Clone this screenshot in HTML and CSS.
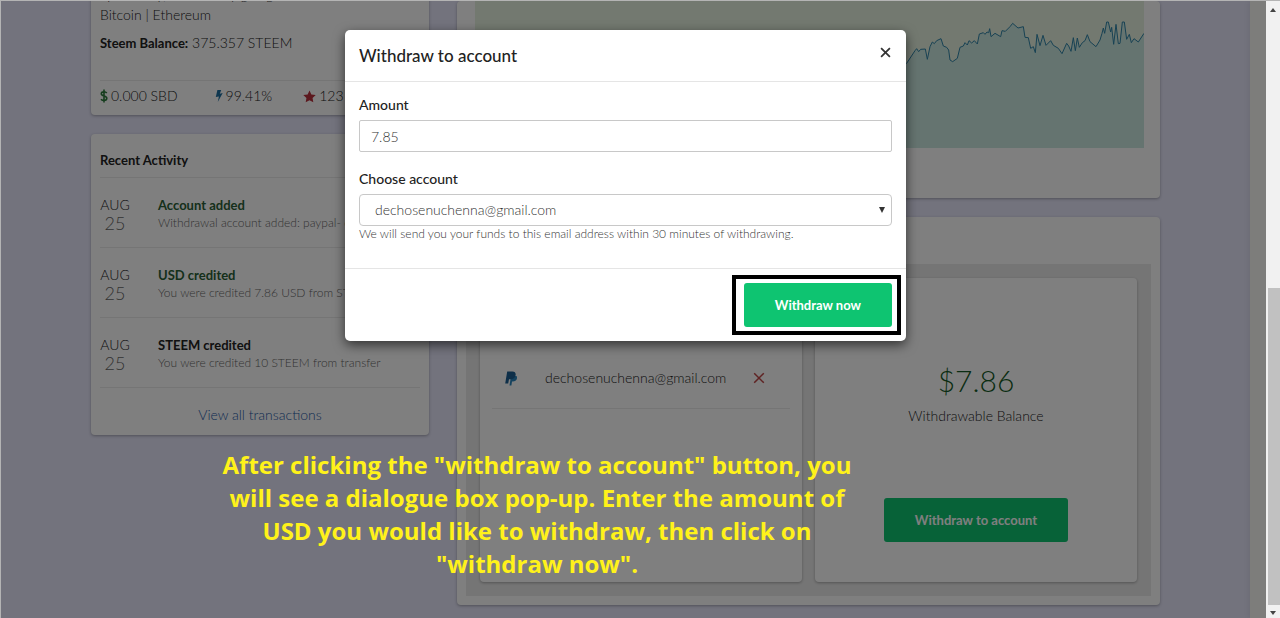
FILE: index.html
```html
<!DOCTYPE html>
<html lang="en">
<head>
<meta charset="utf-8">
<title>Withdraw to account</title>
<link rel="stylesheet" href="styles.css">
</head>
<body>
<div class="window">
  <div class="page">
    <main class="dashboard">
      <div class="column">
        <section class="card profile">
          <p class="bio">Spirituality, community going<br>Bitcoin | Ethereum</p>
          <p class="balance"><strong>Steem Balance:</strong> 375.357 STEEM</p>
          <ul class="stats">
            <li><svg class="icon-dollar" viewBox="0 0 8 14"><path d="M4 0.500v13M6.800 4C6 3 5 2.700 4 2.700 2.300 2.700 1.300 3.500 1.300 4.700c0 3.100 5.500 1.600 5.500 4.600 0 1.300-1.200 2.200-2.800 2.200-1.300 0-2.300-.5-3-1.300"/></svg>0.000 SBD</li>
            <li><svg class="icon-bolt" viewBox="0 0 8 14"><path d="M2.400 1h3.800L4.800 4.700l2.900-.6L2.800 13l1.100-5.600-3.100.7z"/></svg>99.41%</li>
            <li><svg class="icon-star" viewBox="0 0 14 14"><path d="M7 .5l2 4.300 4.700.6-3.400 3.200.8 4.700L7 11l-4.100 2.300.8-4.700L.3 5.400 5 4.800z"/></svg>123</li>
          </ul>
        </section>
        <section class="card activity">
          <h2>Recent Activity</h2>
          <ul class="events">
            <li><div class="date">AUG<span>25</span></div><div class="event"><h3 class="credit">Account added</h3><p>Withdrawal account added: paypal- dechosen</p></div></li>
            <li><div class="date">AUG<span>25</span></div><div class="event"><h3 class="credit">USD credited</h3><p>You were credited 7.86 USD from STEEM</p></div></li>
            <li><div class="date">AUG<span>25</span></div><div class="event"><h3>STEEM credited</h3><p>You were credited 10 STEEM from transfer</p></div></li>
          </ul>
          <a class="all" href="#">View all transactions</a>
        </section>
      </div>
      <div class="column">
        <section class="card market">
          <svg class="chart" viewBox="0 0 2007 441" preserveAspectRatio="none">
            <path class="area"/>
            <path class="line"/>
          </svg>
        </section>
        <section class="card wallet">
          <div class="panels">
            <article class="card accounts">
              <div class="account">
                <svg class="icon-paypal" viewBox="0 0 13 15"><path class="back" d="M4.500 14.500L6 5h5.500c1 1 1 5.500-3.700 5.500H7l-.6 4z"/><path class="front" d="M2.200.5h5.300C10 .5 11 2 10.600 4.200 10 7 8.200 8.200 5.800 8.200H4L3.200 12.500H.2z"/></svg>
                <span>dechosenuchenna@gmail.com</span>
                <button class="remove" aria-label="Remove account"><svg viewBox="0 0 10 10"><path d="M1 1l8 8M9 1L1 9"/></svg></button>
              </div>
            </article>
            <article class="card funds">
              <strong class="sum">$7.86</strong>
              <span>Withdrawable Balance</span>
              <button class="action">Withdraw to account</button>
            </article>
          </div>
        </section>
      </div>
    </main>
    <div class="page-edge"></div>
    <div class="backdrop">
      <form class="modal" role="dialog" aria-labelledby="dialog-title">
        <header class="modal-head">
          <h1 id="dialog-title">Withdraw to account</h1>
          <button type="button" class="close" aria-label="Close"><svg viewBox="0 0 10 10"><path d="M1 1l8 8M9 1L1 9"/></svg></button>
        </header>
        <div class="modal-body">
          <label for="amount">Amount</label>
          <input id="amount" type="text" value="7.85">
          <label for="account">Choose account</label>
          <div class="select">
            <select id="account"><option>dechosenuchenna@gmail.com</option></select>
            <svg viewBox="0 0 6 6"><path d="M0 0h6L3 6z"/></svg>
          </div>
          <small>We will send you your funds to this email address within 30 minutes of withdrawing.</small>
        </div>
        <footer class="modal-foot">
          <div class="highlight"><button type="button" class="action">Withdraw now</button></div>
        </footer>
      </form>
    </div>
    <p class="caption">After clicking the "withdraw to account" button, you will see a dialogue box pop-up. Enter the amount of USD you would like to withdraw, then click on "withdraw now".</p>
  </div>
  <div class="scrollbar">
    <svg viewBox="0 0 6 4"><path d="M3 0l3 4H0z"/></svg>
    <div class="track"><div class="thumb"></div></div>
    <svg viewBox="0 0 6 4"><path d="M0 0h6L3 4z"/></svg>
  </div>
</div>
<script src="chart.js"></script>
</body>
</html>
```
FILE: chart.js
```js
// Samples as "x,y" pairs in the chart's own units; the area is the line closed along the bottom edge.
const samples = `0,230 300,210 600,240 900,200 1200,215 1295,187 1320,149 1325,143 1331,152 1337,145 1351,144
1357,175 1365,137 1372,123 1378,128 1385,119 1398,113 1405,135 1415,139 1421,147 1425,177 1433,182 1447,172
1455,139 1465,135 1470,125 1477,132 1482,119 1490,126 1498,119 1507,129 1513,99 1525,95 1530,100 1536,93
1541,95 1544,83 1548,107 1560,97 1577,107 1581,89 1591,91 1605,77 1613,67 1629,81 1645,77 1650,109 1660,110
1667,142 1675,137 1681,155 1686,100 1695,134 1704,103 1713,133 1727,119 1735,133 1750,142 1761,158 1775,127
1781,135 1788,151 1795,110 1801,149 1807,111 1813,139 1822,125 1830,119 1837,101 1845,122 1863,137 1875,117
1881,97 1885,81 1889,97 1895,63 1900,63 1907,93 1910,79 1916,130 1923,70 1930,128 1935,127 1942,63 1948,63
1955,115 1963,100 1969,125 1977,113 1990,123 2007,97`.split(/\s+/).join("L");
document.querySelector(".line").setAttribute("d", "M" + samples);
document.querySelector(".area").setAttribute("d", "M" + samples + "V441H0z");
```
FILE: styles.css
```css
* { box-sizing: border-box; }
body { margin: 0; overflow: hidden; font: 300 14px/20px Lato, "Noto Sans", sans-serif; color: #222; }
h1, h2, h3, p, ul { margin: 0; padding: 0; list-style: none; }
button, input, select { font: inherit; }
button { border: 0; padding: 0; cursor: pointer; }

.window { display: flex; height: 100vh; border-top: 1px solid #b4b4b4; border-left: 1px solid #b4b4b4; }
.page { position: relative; flex: 1; display: flex; overflow: hidden; background: #e6e6fa; }
.dashboard { flex: 1; display: grid; grid-template-columns: 338fr 703fr; gap: 28px; padding: 0 90px; align-items: start; }
.column { display: flex; flex-direction: column; gap: 19px; min-width: 0; }
.page-edge { width: 16px; background: #fafaf6; box-shadow: 0 0 6px rgba(0, 0, 0, .1); }
.card { background: #fff; border-radius: 4px; box-shadow: 0 1px 3px rgba(0, 0, 0, .3); }

.profile { margin-top: -17px; padding: 0 9px 9px; }
.bio { padding-top: 1px; }
.balance { margin-top: 8px; }
.balance strong, h2, h3 { font-weight: 700; font-size: 13px; color: #222; }
.stats { display: flex; gap: 37px; margin-top: 27px; padding-top: 5px; border-top: 1px solid #ebebeb; white-space: nowrap; }
.stats li { display: flex; align-items: center; gap: 3px; }
.stats li:last-child { margin-left: -6px; }
.icon-dollar { width: 8px; height: 14px; fill: none; stroke: #2c7a3c; stroke-width: 1.600; }
.icon-bolt { width: 8px; height: 14px; fill: #1f6fa0; }
.icon-star { width: 13px; height: 13px; fill: #b8303c; }

.activity { padding: 16px 9px 10px; }
.activity h2 { padding-bottom: 7px; line-height: 20px; border-bottom: 1px solid #ebebeb; }
.events li { display: flex; gap: 28px; height: 70px; padding-top: 17px; border-bottom: 1px solid #ebebeb; }
.date { width: 30px; text-align: center; line-height: 19px; }
.date span { display: block; font-size: 18px; color: #666; }
.event { flex: 1; min-width: 0; }
.event h3 { line-height: 20px; }
.event .credit { color: #2b6137; }
.event p { font-size: 12px; line-height: 16px; color: #666; white-space: nowrap; }
.all { display: block; margin-top: 17px; text-align: center; color: #2457a5; text-decoration: none; }

.market { padding: 0 16px 50px 18px; }
.chart { display: block; width: 100%; height: 147px; background: #e6f2e0; }
.area { fill: #cbe8e0; }
.line { fill: none; stroke: #2f84a8; stroke-width: 1; vector-effect: non-scaling-stroke; }
.wallet { padding: 47px 9px 9px; }
.panels { display: grid; grid-template-columns: 1fr 1fr; gap: 13px; padding: 14px; background: #ebebeb; }
.panels .card { height: 304px; }
.accounts { padding: 82px 12px 0; }
.account { display: flex; align-items: center; height: 49px; padding: 0 25px 12px 13px; border-bottom: 1px solid #ebebeb; }
.account span { margin-left: 27px; }
.icon-paypal { width: 13px; height: 15px; }
.front { fill: #1d5f93; }
.back { fill: #2a85bd; }
.remove { margin-left: auto; width: 12px; height: 12px; background: none; }
.remove svg, .close svg { display: block; width: 100%; height: 100%; fill: none; stroke: #bf4747; stroke-width: 1.300; }
.funds { display: flex; flex-direction: column; align-items: center; padding: 82px 20px 40px; }
.sum { font-size: 30px; line-height: 40px; font-weight: 300; color: #145a26; }
.funds span { margin-top: 6px; }
.action { height: 44px; padding: 0 31px; border-radius: 3px; background: #0ec471; color: #fff; font-size: 13px; font-weight: 700; }
.funds .action { margin-top: auto; }

.backdrop { position: absolute; inset: 0; display: flex; justify-content: center; align-items: flex-start; padding: 29px 16px 0 0; background: rgba(0, 0, 0, .5); }
.modal { width: 561px; background: #fff; border-radius: 5px; box-shadow: 0 4px 12px rgba(0, 0, 0, .6); }
.modal-head { display: flex; justify-content: space-between; align-items: center; height: 52px; padding: 0 15px 0 14px; border-bottom: 1px solid #e5e5e5; }
.modal-head h1 { font-size: 17px; font-weight: 500; line-height: 24px; }
.close { width: 11px; height: 11px; margin-bottom: 6px; background: none; }
.close svg { stroke: #333; stroke-width: 1.600; }
.modal-body { display: flex; flex-direction: column; padding: 13px 14px 26px; }
.modal-body label { margin-bottom: 5px; font-weight: 500; }
.modal-body input, .modal-body select { width: 100%; height: 32px; padding: 0 11px; border: 1px solid #c8c8c8; border-radius: 2px; background: #fff; color: #333; }
.modal-body input { margin-bottom: 17px; }
.modal-body select { appearance: none; padding: 0 15px; border-radius: 4px; }
.select { position: relative; }
.select svg { position: absolute; right: 7px; top: 13px; width: 6px; height: 6px; fill: #333; pointer-events: none; }
.modal-body small { font-size: 12px; line-height: 16px; color: #333; }
.modal-foot { display: flex; justify-content: flex-end; padding: 14px; border-top: 1px solid #e5e5e5; }
.highlight { position: relative; }
.highlight::after { content: ""; position: absolute; inset: -8px -9px -8px -12px; border: 4px solid #000; pointer-events: none; }

.caption { position: absolute; left: 211px; top: 447px; width: 650px; text-align: center; color: #fff21a; font: 700 24px/33px "Open Sans", "Noto Sans", sans-serif; }

.scrollbar { width: 14px; display: flex; flex-direction: column; align-items: center; gap: 6px; padding: 7px 0 3px; background: #f1f1f1; }
.scrollbar svg { width: 6px; height: 4px; fill: #444; }
.track { flex: 1; width: 100%; display: flex; flex-direction: column; justify-content: flex-end; }
.thumb { height: 54%; margin-left: 2px; background: #c1c1c1; }
```
